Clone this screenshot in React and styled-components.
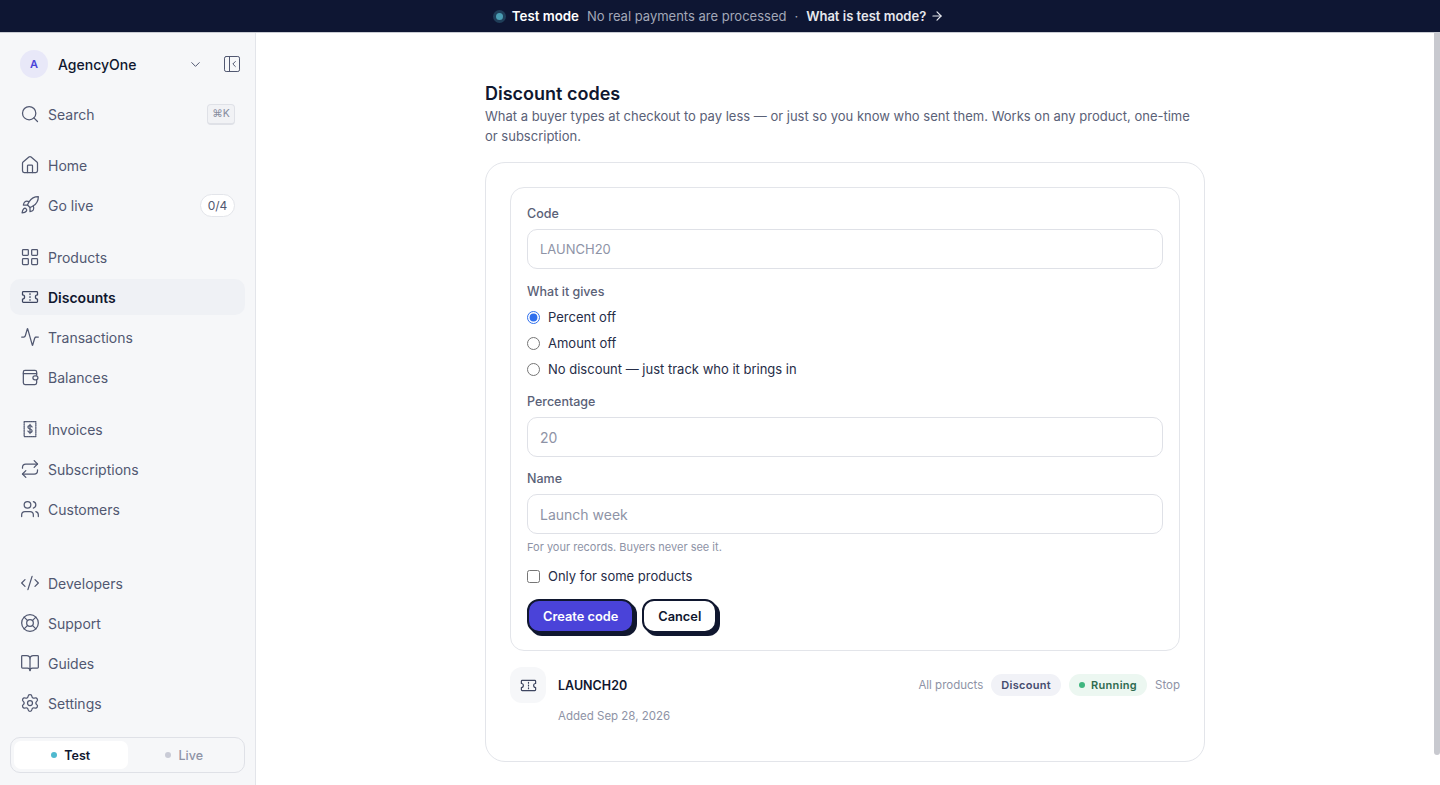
import React from 'react';
import styled, { createGlobalStyle } from 'styled-components';
import {
  ArrowRight,
  BookOpen,
  ChevronDown,
  CodeXml,
  House,
  LayoutGrid,
  Activity,
  LifeBuoy,
  PanelLeftClose,
  Repeat,
  Rocket,
  Search,
  Settings,
  Users,
} from 'lucide-react';

const GlobalStyle = createGlobalStyle`
  html, body { margin: 0; height: 100%; }
  body {
    font-family: Inter, "Liberation Sans", sans-serif;
    color: #10172f;
    background: #fff;
    overflow: hidden;
  }
  * { box-sizing: border-box; }
`;

const Page = styled.div`
  height: 100vh;
  display: flex;
  flex-direction: column;
`;

const Banner = styled.div`
  height: 33px;
  flex: none;
  background: #0e1633;
  display: flex;
  align-items: center;
  justify-content: center;
  gap: 8px;
  font-size: 13px;
  border-bottom: 1px solid #c9ccd3;
`;

const BannerDot = styled.span`
  width: 7px;
  height: 7px;
  margin-right: 1px;
  border-radius: 50%;
  background: #4a9db3;
  box-shadow: 0 0 0 3px rgba(74, 157, 179, 0.3);
`;

const BannerStrong = styled.b`
  color: #fff;
  font-size: 13.3px;
  font-weight: 600;
`;

const BannerMuted = styled.span`
  color: #a3a8b8;
`;

const BannerLink = styled.span`
  color: #e6e8ee;
  font-weight: 600;
  display: flex;
  align-items: center;
  gap: 4px;
`;

const Body = styled.div`
  flex: 1;
  min-height: 0;
  display: flex;
`;

const Sidebar = styled.aside`
  width: 256px;
  flex: none;
  background: #f6f7f9;
  border-right: 1px solid #e3e5ea;
  padding: 13px 10px 12px;
  display: flex;
  flex-direction: column;
`;

const Workspace = styled.div`
  height: 36px;
  display: flex;
  align-items: center;
  padding: 0 3px 0 10px;
  margin-bottom: 14px;
`;

const Avatar = styled.span`
  width: 28px;
  height: 28px;
  border-radius: 50%;
  background: #e8e8f8;
  color: #4a43d9;
  font-size: 11px;
  font-weight: 600;
  display: flex;
  align-items: center;
  justify-content: center;
  margin-right: 10px;
`;

const WorkspaceName = styled.span`
  flex: 1;
  font-size: 14px;
  font-weight: 500;
  color: #10172f;
`;

const Chevron = styled(ChevronDown)`
  color: #515871;
  margin-right: 19px;
`;

const PanelToggle = styled(PanelLeftClose)`
  color: #515871;
`;

const NavGroup = styled.div`
  display: flex;
  flex-direction: column;
  gap: 4px;
  margin-bottom: ${(p) => p.$after ?? 16}px;
`;

const NavRow = styled.div`
  height: 36px;
  display: flex;
  align-items: center;
  gap: 8px;
  padding: 0 10px;
  border-radius: 10px;
  font-size: 14px;
  color: ${(p) => (p.$active ? '#10172f' : '#515871')};
  font-weight: ${(p) => (p.$active ? 600 : 400)};
  background: ${(p) => (p.$active ? '#eff1f5' : 'transparent')};
  svg { flex: none; color: ${(p) => (p.$active ? '#3d4560' : '#515871')}; }
`;

const NavLabel = styled.span`
  flex: 1;
`;

const Kbd = styled.kbd`
  width: 28px;
  height: 21px;
  border: 1px solid #dfe1e7;
  border-bottom-width: 2px;
  border-radius: 4px;
  background: #f1f2f5;
  color: #868b9d;
  font-family: Inter, sans-serif;
  font-size: 10.5px;
  display: flex;
  align-items: center;
  justify-content: center;
`;

const CountPill = styled.span`
  width: 35px;
  height: 23px;
  border: 1px solid #e3e5ea;
  border-radius: 12px;
  background: #fff;
  color: #515871;
  font-size: 12px;
  display: flex;
  align-items: center;
  justify-content: center;
`;

const Spacer = styled.div`
  flex: 1;
`;

const ModeSwitch = styled.div`
  height: 36px;
  flex: none;
  margin-top: 16px;
  padding: 3px;
  display: grid;
  grid-template-columns: 1fr 1fr;
  border: 1px solid #dfe1e7;
  border-radius: 10px;
  background: #f6f7f9;
`;

const ModeOption = styled.div`
  display: flex;
  align-items: center;
  justify-content: center;
  gap: 7px;
  border-radius: 7px;
  font-size: 12.5px;
  font-weight: ${(p) => (p.$active ? 600 : 500)};
  color: ${(p) => (p.$active ? '#10172f' : '#8e93a6')};
  background: ${(p) => (p.$active ? '#fff' : 'transparent')};
`;

const ModeDot = styled.span`
  width: 6px;
  height: 6px;
  border-radius: 50%;
  background: ${(p) => (p.$active ? '#4fb9cf' : '#c9cbd6')};
`;

const MainArea = styled.div`
  position: relative;
  flex: 1;
  min-width: 0;
  display: flex;
`;

const Main = styled.main`
  flex: 1;
  min-width: 0;
  overflow-y: auto;
  padding: 48px 6px 55px 0;
`;

const ScrollThumb = styled.div`
  position: absolute;
  top: 0;
  right: 0;
  width: 6px;
  height: 722px;
  background: #c8c9cf;
  border-radius: 0 0 3px 3px;
`;

const Content = styled.div`
  width: 720px;
  margin: 0 auto;
`;

const Title = styled.h1`
  margin: 0;
  font-size: 18px;
  line-height: 25px;
  font-weight: 600;
  color: #10172f;
`;

const Lead = styled.p`
  margin: 0 0 16px;
  font-size: 13px;
  line-height: 20px;
  color: #5a6177;
`;

const Card = styled.section`
  border: 1px solid #e3e5ea;
  border-radius: 20px;
  padding: 24px 24px 38px;
  height: 600px;
`;

const FormBox = styled.form`
  border: 1px solid #e3e5ea;
  border-radius: 14px;
  padding: 16px 16px 15px;
  margin-bottom: 16px;
`;

const FieldLabel = styled.label`
  display: block;
  padding-top: 1px;
  font-size: 12.5px;
  line-height: 18px;
  font-weight: 500;
  color: #5a6177;
  margin-bottom: ${(p) => p.$below ?? 6}px;
`;

const TextInput = styled.input`
  display: block;
  width: 100%;
  height: 40px;
  padding: 0 12px;
  margin-bottom: ${(p) => p.$below ?? 12}px;
  border: 1px solid #dfe1e7;
  border-radius: 10px;
  background: #fff;
  font-family: inherit;
  font-size: ${(p) => p.$size || 14}px;
  &::placeholder { color: #8e93a6; opacity: 1; }
`;

const ChoiceRow = styled.label`
  height: 26px;
  display: flex;
  align-items: center;
  gap: 8px;
  font-size: 13px;
  color: #262d47;
  input { margin: 0; accent-color: #2f6fed; }
`;

const Choices = styled.div`
  margin: 3px 0 10px;
`;

const Hint = styled.p`
  margin: 0 0 8px;
  font-size: 11px;
  line-height: 16px;
  color: #8e93a6;
`;

const Actions = styled.div`
  display: flex;
  gap: 8px;
  margin-top: 10px;
`;

const ActionButton = styled.button`
  height: 34px;
  margin-bottom: 2px;
  padding: 0 14px;
  border: 2px solid #10172f;
  border-radius: 12px;
  box-shadow: 3px 3px 0 #10172f;
  font-family: inherit;
  font-size: 12.8px;
  font-weight: 600;
  background: ${(p) => (p.$primary ? '#4a43d9' : '#fff')};
  color: ${(p) => (p.$primary ? '#fff' : '#10172f')};
`;

const CodeRow = styled.div`
  display: grid;
  grid-template-columns: 36px 1fr auto;
  column-gap: 12px;
  row-gap: 3px;
  align-items: center;
`;

const CodeIcon = styled.span`
  width: 36px;
  height: 36px;
  border-radius: 12px;
  background: #f6f7f9;
  color: #3d4560;
  display: flex;
  align-items: center;
  justify-content: center;
`;

const CodeName = styled.span`
  font-size: 12.5px;
  font-weight: 600;
  color: #10172f;
`;

const CodeMeta = styled.div`
  display: flex;
  align-items: center;
  gap: 8px;
`;

const MetaText = styled.span`
  font-size: 11.5px;
  color: #8e93a6;
`;

const Pill = styled.span`
  height: 22px;
  padding: 0 10px;
  border-radius: 11px;
  display: flex;
  align-items: center;
  gap: 6px;
  font-size: 11px;
  font-weight: 600;
  letter-spacing: 0.3px;
  background: ${(p) => (p.$tone === 'green' ? '#ecf7f1' : '#f1f2f7')};
  color: ${(p) => (p.$tone === 'green' ? '#2f6b50' : '#454c6e')};
`;

const PillDot = styled.span`
  width: 6px;
  height: 6px;
  border-radius: 50%;
  background: #3fb67f;
`;

const AddedOn = styled.span`
  grid-column: 2 / 4;
  font-size: 11.5px;
  line-height: 20px;
  color: #8e93a6;
`;

const Glyph = ({ children, width = 20, height = 20, strokeWidth = 1.5 }) => (
  <svg width={width} height={height} viewBox="0 0 24 24" fill="none" stroke="currentColor" strokeWidth={strokeWidth} strokeLinecap="round" strokeLinejoin="round">
    {children}
  </svg>
);

const TicketIcon = (props) => (
  <Glyph {...props}>
    <path d="M4 5.5h16a1 1 0 0 1 1 1v3a2.5 2.5 0 0 0 0 5v3a1 1 0 0 1-1 1H4a1 1 0 0 1-1-1v-3a2.5 2.5 0 0 0 0-5v-3a1 1 0 0 1 1-1z" />
    <path d="M12 8v1M12 11.5v1M12 15v1" />
  </Glyph>
);

const InvoiceIcon = (props) => (
  <Glyph {...props}>
    <path d="M5 3h14v18H5z" strokeDasharray="1.6 1" />
    <path d="M14.5 9.5c-.4-.9-1.3-1.500-2.5-1.500-1.500 0-2.500.8-2.500 2 0 2.600 5 1.400 5 4 0 1.200-1 2-2.500 2-1.200 0-2.100-.6-2.500-1.500" />
    <path d="M12 6.5v11" />
  </Glyph>
);

const WalletIcon = (props) => (
  <Glyph {...props}>
    <path d="M20 10V6a2 2 0 0 0-2-2H6a2 2 0 0 0-2 2v13a2 2 0 0 0 2 2h12a2 2 0 0 0 2-2v-3" />
    <path d="M4 8h16" />
    <rect x="15.5" y="10.5" width="6" height="5" rx="2.5" />
  </Glyph>
);

const groups = [
  { after: 16, rows: [{ label: 'Home', Icon: House }, { label: 'Go live', Icon: Rocket, count: '0/4' }] },
  {
    after: 16,
    rows: [
      { label: 'Products', Icon: LayoutGrid },
      { label: 'Discounts', Icon: TicketIcon, active: true },
      { label: 'Transactions', Icon: Activity },
      { label: 'Balances', Icon: WalletIcon },
    ],
  },
  {
    after: 0,
    rows: [
      { label: 'Invoices', Icon: InvoiceIcon },
      { label: 'Subscriptions', Icon: Repeat },
      { label: 'Customers', Icon: Users },
    ],
  },
];

const footerRows = [
  { label: 'Developers', Icon: CodeXml },
  { label: 'Support', Icon: LifeBuoy },
  { label: 'Guides', Icon: BookOpen },
  { label: 'Settings', Icon: Settings },
];

const NavItem = ({ label, Icon, active, count }) => (
  <NavRow $active={active}>
    <Icon width={20} height={20} strokeWidth={1.5} />
    <NavLabel>{label}</NavLabel>
    {count && <CountPill>{count}</CountPill>}
  </NavRow>
);

export default function App() {
  return (
    <Page>
      <GlobalStyle />
      <Banner>
        <BannerDot />
        <BannerStrong>Test mode</BannerStrong>
        <BannerMuted>No real payments are processed</BannerMuted>
        <BannerMuted>·</BannerMuted>
        <BannerLink>
          What is test mode? <ArrowRight size={14} strokeWidth={2} />
        </BannerLink>
      </Banner>
      <Body>
        <Sidebar>
          <Workspace>
            <Avatar>A</Avatar>
            <WorkspaceName>AgencyOne</WorkspaceName>
            <Chevron size={15} strokeWidth={1.6} />
            <PanelToggle size={20} strokeWidth={1.2} />
          </Workspace>
          <NavGroup $after={15}>
            <NavRow>
              <Search width={20} height={20} strokeWidth={1.5} />
              <NavLabel>Search</NavLabel>
              <Kbd>⌘K</Kbd>
            </NavRow>
          </NavGroup>
          {groups.map((group) => (
            <NavGroup key={group.rows[0].label} $after={group.after}>
              {group.rows.map((row) => (
                <NavItem key={row.label} {...row} />
              ))}
            </NavGroup>
          ))}
          <Spacer />
          <NavGroup $after={0}>
            {footerRows.map((row) => (
              <NavItem key={row.label} {...row} />
            ))}
          </NavGroup>
          <ModeSwitch>
            <ModeOption $active>
              <ModeDot $active />
              Test
            </ModeOption>
            <ModeOption>
              <ModeDot />
              Live
            </ModeOption>
          </ModeSwitch>
        </Sidebar>
        <MainArea>
          <Main>
            <Content>
              <Title>Discount codes</Title>
              <Lead>
                What a buyer types at checkout to pay less — or just so you know who sent them. Works on any product, one-time or subscription.
              </Lead>
              <Card>
                <FormBox onSubmit={(e) => e.preventDefault()}>
                  <FieldLabel>Code</FieldLabel>
                  <TextInput placeholder="LAUNCH20" $size={13} $below={13} />
                  <FieldLabel $below={0}>What it gives</FieldLabel>
                  <Choices>
                    <ChoiceRow>
                      <input type="radio" name="gives" defaultChecked />
                      Percent off
                    </ChoiceRow>
                    <ChoiceRow>
                      <input type="radio" name="gives" />
                      Amount off
                    </ChoiceRow>
                    <ChoiceRow>
                      <input type="radio" name="gives" />
                      No discount — just track who it brings in
                    </ChoiceRow>
                  </Choices>
                  <FieldLabel>Percentage</FieldLabel>
                  <TextInput placeholder="20" />
                  <FieldLabel>Name</FieldLabel>
                  <TextInput placeholder="Launch week" $below={5} />
                  <Hint>For your records. Buyers never see it.</Hint>
                  <ChoiceRow>
                    <input type="checkbox" />
                    Only for some products
                  </ChoiceRow>
                  <Actions>
                    <ActionButton $primary type="submit">Create code</ActionButton>
                    <ActionButton type="button">Cancel</ActionButton>
                  </Actions>
                </FormBox>
                <CodeRow>
                  <CodeIcon>
                    <TicketIcon width={19} height={19} />
                  </CodeIcon>
                  <CodeName>LAUNCH20</CodeName>
                  <CodeMeta>
                    <MetaText>All products</MetaText>
                    <Pill>Discount</Pill>
                    <Pill $tone="green">
                      <PillDot />
                      Running
                    </Pill>
                    <MetaText>Stop</MetaText>
                  </CodeMeta>
                  <AddedOn>Added Sep 28, 2026</AddedOn>
                </CodeRow>
              </Card>
            </Content>
          </Main>
          <ScrollThumb />
        </MainArea>
      </Body>
    </Page>
  );
}
